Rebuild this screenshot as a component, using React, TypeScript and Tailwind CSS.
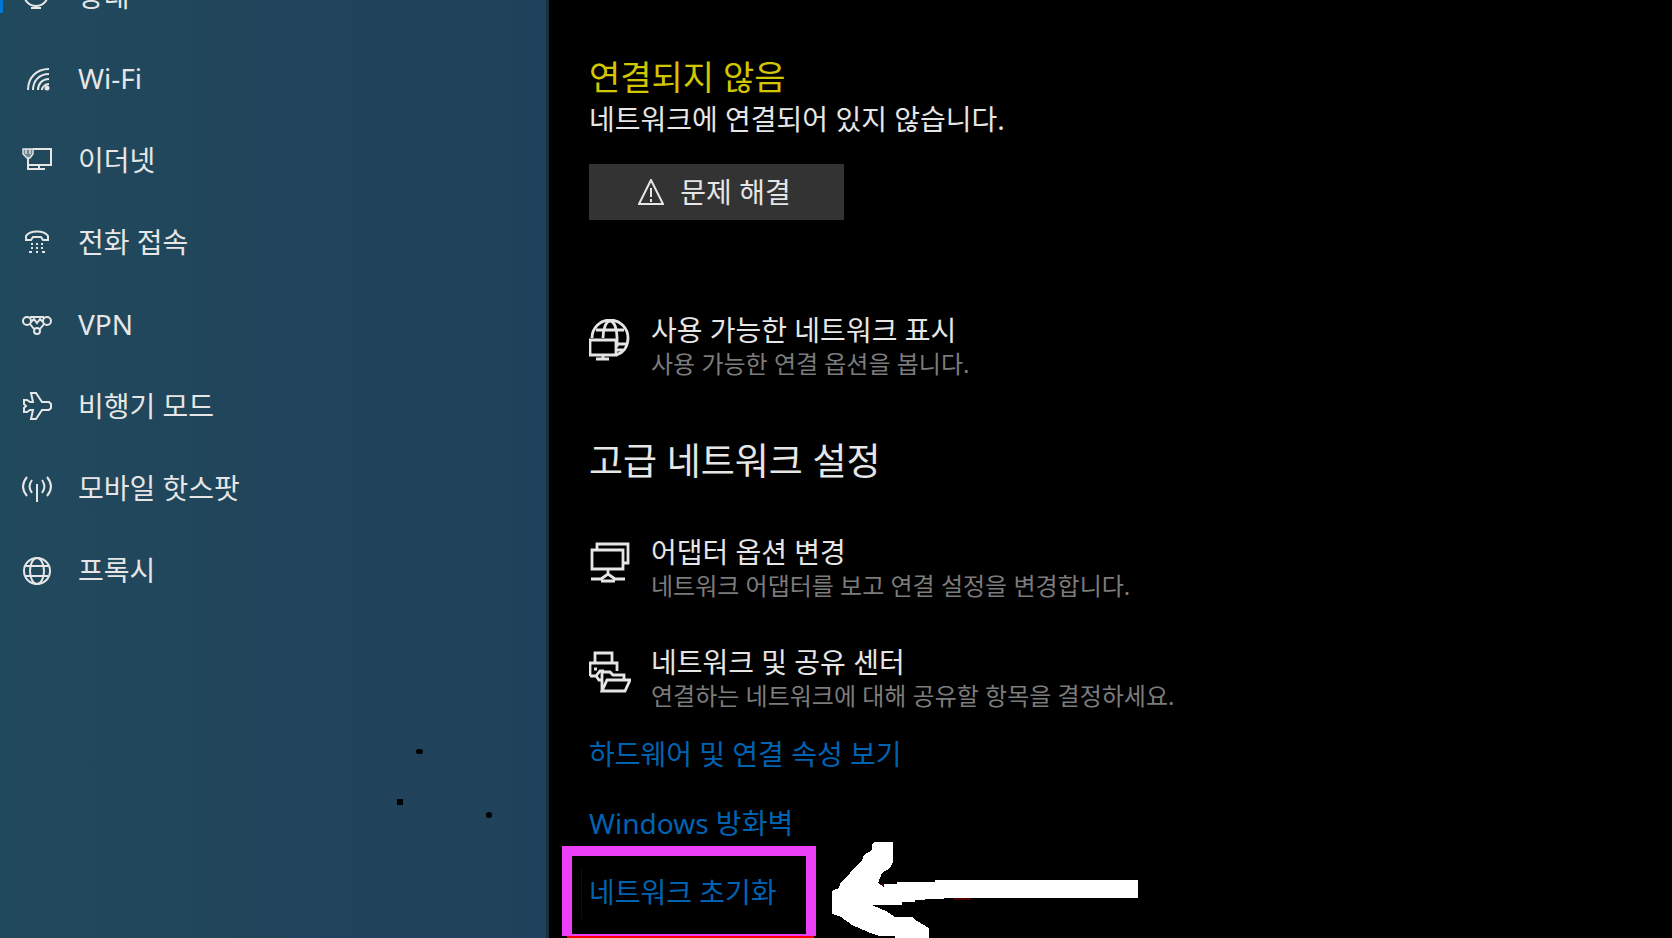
import type { ReactNode } from 'react';

interface NavItem {
    id: string;
    label: string;
    icon: ReactNode;
}

interface SettingItem {
    id: string;
    title: string;
    description: string;
    icon: ReactNode;
}

const navItems: NavItem[] = [
    {
        id: 'status',
        label: '상태',
        icon: (
            <>
                <circle cx="14" cy="13" r="12" />
                <path d="M2 13h24M9 27h10" />
            </>
        ),
    },
    {
        id: 'wifi',
        label: 'Wi-Fi',
        icon: (
            <>
                <path d="M6 27C6 15 14 6 27 6" />
                <path d="M11 27c0-9 6-16 16-16" />
                <path d="M16 27c0-6 4-11 11-11" />
                <path d="M20 27c0-3 3-6 7-6" />
                <circle cx="25" cy="25" r="1.5" fill="currentColor" />
            </>
        ),
    },
    {
        id: 'ethernet',
        label: '이더넷',
        icon: (
            <>
                <path d="M11 4h18v16H6v-7" />
                <path d="M17 20v4M9 24h14M6 20v4h4" />
                <path d="M1 4h10v5l-3 4H5L1 9z" fill="currentColor" fillOpacity="0.4" strokeWidth="1.4" />
                <path d="M4 4v5M8 4v5" strokeWidth="1.4" />
            </>
        ),
    },
    {
        id: 'dialup',
        label: '전화 접속',
        icon: (
            <>
                <path d="M4 9c4-6 18-6 22 0v4h-5l-2-3h-8l-2 3H4z" />
                <path d="M9 17h2M14 17h2M19 17h2M9 21h2M14 21h2M19 21h2M7 25h3M14 25h2M20 25h3" />
            </>
        ),
    },
    {
        id: 'vpn',
        label: 'VPN',
        icon: (
            <>
                <circle cx="5" cy="12" r="4" />
                <circle cx="25" cy="12" r="4" />
                <circle cx="15" cy="22" r="3" />
                <path d="M8 8h14M9 13l3-3 3 4 3-4 3 3M12 20l-4-5M18 20l4-5" />
            </>
        ),
    },
    {
        id: 'airplane',
        label: '비행기 모드',
        icon: (
            <path d="M9 2h5l6 9h7l2 2v4l-2 2h-7l-6 9H9l2-9H8l-3 2H2v-4l2-2-2-2V9h3l3 2h3z" />
        ),
    },
    {
        id: 'hotspot',
        label: '모바일 핫스팟',
        icon: (
            <>
                <path d="M5 4c-5 6-5 13 0 19M25 4c5 6 5 13 0 19M10 7c-3 4-3 9 0 13M20 7c3 4 3 9 0 13" />
                <path d="M15 11v18" />
            </>
        ),
    },
    {
        id: 'proxy',
        label: '프록시',
        icon: (
            <>
                <circle cx="15" cy="16" r="13" />
                <ellipse cx="15" cy="16" rx="7" ry="13" />
                <path d="M4 11h22M4 21h22" />
            </>
        ),
    },
];

const availableNetworks: SettingItem = {
    id: 'available',
    title: '사용 가능한 네트워크 표시',
    description: '사용 가능한 연결 옵션을 봅니다.',
    icon: (
        <>
            <path d="M3 19a18 18 0 0 1 36 0c0 9-5 15-12 17" />
            <path d="M14 19C14 10 17 2 21 2s7 7 7 16v10M7 11h28M28 25h10M28 31h6" />
            <path d="M1 21h26v15H1z" fill="#000" />
            <path d="M14 36v4M7 40h13" />
        </>
    ),
};

const advancedItems: SettingItem[] = [
    {
        id: 'adapter',
        title: '어댑터 옵션 변경',
        description: '네트워크 어댑터를 보고 연결 설정을 변경합니다.',
        icon: (
            <>
                <path d="M8 8V3h31v19h-4" />
                <path d="M3 9h31v19H3z" />
                <path d="M19 28v5M2 38h10l7-5 7 5h10M12 40h14" />
            </>
        ),
    },
    {
        id: 'sharing',
        title: '네트워크 및 공유 센터',
        description: '연결하는 네트워크에 대해 공유할 항목을 결정하세요.',
        icon: (
            <>
                <path d="M6 12V2h17v10M1 25V12h27v8M1 25h6l3 4h2" />
                <path d="M5 18h3M7 25l4-5h4" />
                <path d="M13 40V21h8l3 3h11v5" />
                <path d="M13 40l5-11h23l-5 11z" />
            </>
        ),
    },
];

const links = [
    { id: 'properties', label: '하드웨어 및 연결 속성 보기' },
    { id: 'firewall', label: 'Windows 방화벽' },
];

// Manchas sobre el panel lateral
const specks = [
    'left-[416px] top-[749px] h-[5px] w-[7px] rounded-full',
    'left-[397px] top-[799px] size-[6px]',
    'left-[486px] top-[812px] size-[6px] rounded-full',
];

function SettingRow({ item }: { item: SettingItem }) {
    return (
        <a href={`#${item.id}`} className="flex items-start gap-5">
            <svg viewBox="0 0 42 42" className="mt-[7px] size-[42px] shrink-0" fill="none" stroke="currentColor" strokeWidth="2.8">
                {item.icon}
            </svg>
            <span>
                <span className="block text-[28px] leading-9">{item.title}</span>
                <span className="block text-[24px] leading-8 text-[#7c7c7c]">{item.description}</span>
            </span>
        </a>
    );
}

export default function App() {
    return (
        <div className="flex h-screen overflow-hidden bg-black font-['Noto_Sans','Noto_Sans_CJK_KR',sans-serif] text-[#e6e6e6]">
            <aside className="relative w-[549px] shrink-0 border-r-[3px] border-[#1a303f] bg-linear-to-r from-[#21495c] to-[#20415b]">
                <nav className="-mt-[45px]">
                    {navItems.map((item) => (
                        <a
                            key={item.id}
                            href={`#${item.id}`}
                            className="relative flex h-[82px] items-center gap-[26px] pl-[22px] text-[28px]"
                        >
                            {item.id === 'status' && <span className="absolute left-0 top-6 h-[34px] w-[3px] bg-[#0078d7]" />}
                            <svg viewBox="0 0 30 30" className="size-[30px] shrink-0" fill="none" stroke="currentColor" strokeWidth="2">
                                {item.icon}
                            </svg>
                            {item.label}
                        </a>
                    ))}
                </nav>
                {specks.map((speck) => (
                    <span key={speck} className={`absolute bg-black ${speck}`} />
                ))}
            </aside>

            <main className="min-w-0 flex-1 pl-10 pt-14">
                <h2 className="text-[34px] leading-[42px] text-[#d2c600]">연결되지 않음</h2>
                <p className="text-[28px] leading-[42px]">네트워크에 연결되어 있지 않습니다.</p>

                <button className="mt-6 flex h-14 w-[255px] items-center justify-center gap-4 bg-[#333333] pr-1 text-[28px]">
                    <svg viewBox="1 1 26 26" className="size-[26px]" fill="none" stroke="currentColor" strokeWidth="2">
                        <path d="M14 2L2 26h24z" />
                        <path d="M14 10v9M14 21v3" />
                    </svg>
                    문제 해결
                </button>

                <div className="mt-[92px]">
                    <SettingRow item={availableNetworks} />
                </div>

                <h2 className="mt-14 text-[37px] leading-[50px]">고급 네트워크 설정</h2>

                <div className="mt-12 flex flex-col gap-[42px]">
                    {advancedItems.map((item) => (
                        <SettingRow key={item.id} item={item} />
                    ))}
                </div>

                <div className="mt-6 flex flex-col items-start gap-[33px] text-[28px] leading-9 text-[#0063b1]">
                    {links.map((link) => (
                        <a key={link.id} href={`#${link.id}`}>{link.label}</a>
                    ))}
                    <div className="relative">
                        <a href="#reset">네트워크 초기화</a>

                        {/* Recuadro y flecha que marcan el enlace */}
                        <span className="absolute -left-[27px] -top-7 h-[90px] w-[254px] border-10 border-b-2 border-[#ec3ff8]" />
                        <span className="absolute -left-[22px] top-[62px] h-[2px] w-[247px] bg-[#ff0000]" />
                        <span className="absolute -left-2 -top-[5px] h-[50px] w-px bg-[#300000]" />
                        <svg viewBox="830 840 310 98" className="absolute -top-[34px] left-[241px] h-[98px] w-[310px]" fill="#fff" shapeRendering="crispEdges">
                            <path d="M874 884h11v4h-11zM953 897h18v3h-18z" fill="#4a0000" />
                            <path d="M875 842H893V862L890 868 882 873 878 883 884 887V884H897V882H935V880H1138V898H953L915 900V902H902V905H872L886 911 895 917H912L917 921 929 928V938H895V936H879L868 932 852 925 841 917 832 914V891L839 888 840 884 850 873 862 860 864 855 872 850V844Z" />
                        </svg>
                    </div>
                </div>
            </main>
        </div>
    );
}
